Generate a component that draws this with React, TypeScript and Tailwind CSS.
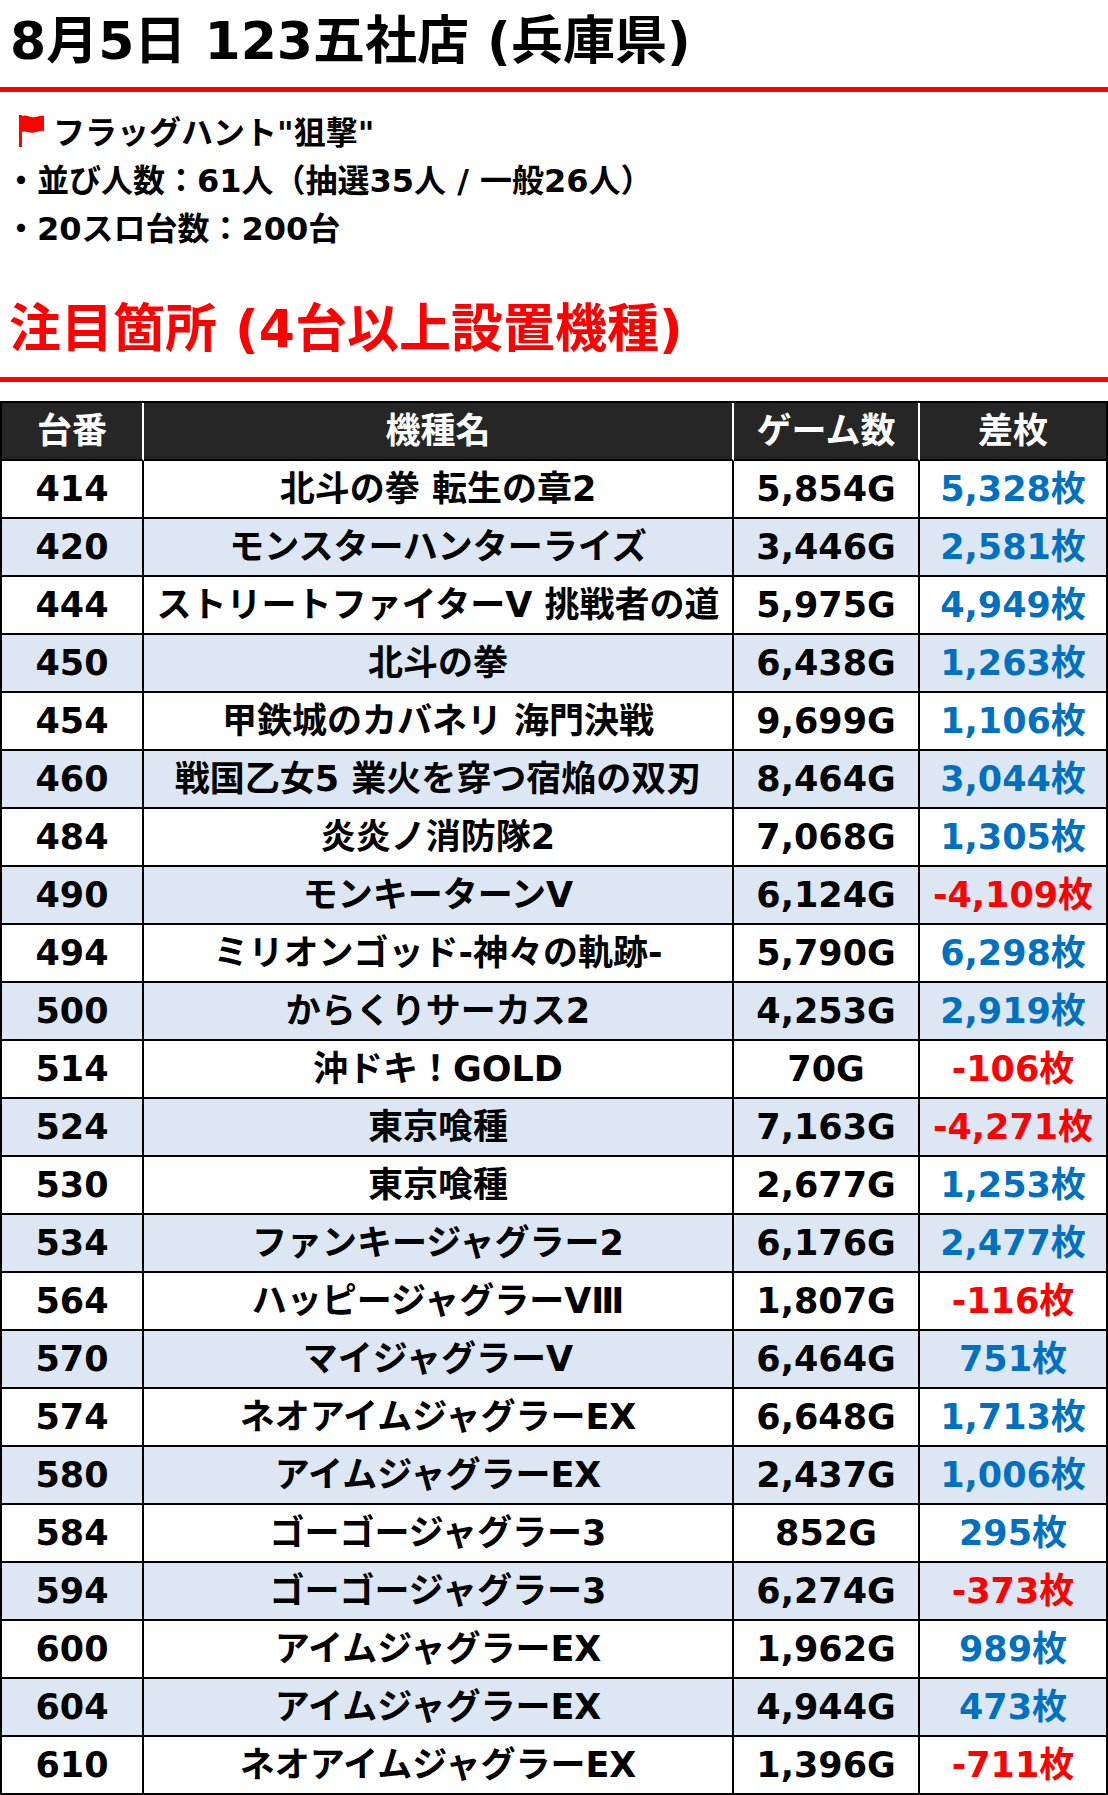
import React from 'react';

type Row = { no: string; name: string; games: string; diff: string };

const rows: Row[] = [
  { no: '414', name: '北斗の拳 転生の章2', games: '5,854G', diff: '5,328枚' },
  { no: '420', name: 'モンスターハンターライズ', games: '3,446G', diff: '2,581枚' },
  { no: '444', name: 'ストリートファイターV 挑戦者の道', games: '5,975G', diff: '4,949枚' },
  { no: '450', name: '北斗の拳', games: '6,438G', diff: '1,263枚' },
  { no: '454', name: '甲鉄城のカバネリ 海門決戦', games: '9,699G', diff: '1,106枚' },
  { no: '460', name: '戦国乙女5 業火を穿つ宿焔の双刃', games: '8,464G', diff: '3,044枚' },
  { no: '484', name: '炎炎ノ消防隊2', games: '7,068G', diff: '1,305枚' },
  { no: '490', name: 'モンキーターンV', games: '6,124G', diff: '-4,109枚' },
  { no: '494', name: 'ミリオンゴッド-神々の軌跡-', games: '5,790G', diff: '6,298枚' },
  { no: '500', name: 'からくりサーカス2', games: '4,253G', diff: '2,919枚' },
  { no: '514', name: '沖ドキ！GOLD', games: '70G', diff: '-106枚' },
  { no: '524', name: '東京喰種', games: '7,163G', diff: '-4,271枚' },
  { no: '530', name: '東京喰種', games: '2,677G', diff: '1,253枚' },
  { no: '534', name: 'ファンキージャグラー2', games: '6,176G', diff: '2,477枚' },
  { no: '564', name: 'ハッピージャグラーVⅢ', games: '1,807G', diff: '-116枚' },
  { no: '570', name: 'マイジャグラーV', games: '6,464G', diff: '751枚' },
  { no: '574', name: 'ネオアイムジャグラーEX', games: '6,648G', diff: '1,713枚' },
  { no: '580', name: 'アイムジャグラーEX', games: '2,437G', diff: '1,006枚' },
  { no: '584', name: 'ゴーゴージャグラー3', games: '852G', diff: '295枚' },
  { no: '594', name: 'ゴーゴージャグラー3', games: '6,274G', diff: '-373枚' },
  { no: '600', name: 'アイムジャグラーEX', games: '1,962G', diff: '989枚' },
  { no: '604', name: 'アイムジャグラーEX', games: '4,944G', diff: '473枚' },
  { no: '610', name: 'ネオアイムジャグラーEX', games: '1,396G', diff: '-711枚' },
];

function Flag() {
  return (
    <svg width="25" height="32" viewBox="0 0 25 32" className="shrink-0 mt-[6px]">
      <rect x="0" y="0" width="3" height="32" fill="#ff0000" />
      <path
        d="M3 1 C 7 -1, 11 3, 16 2 C 19 1.5, 22 0, 25 1 L 25 16 C 22 15, 19 16.5, 15 17.5 C 10 18.5, 7 15.5, 3 17 Z"
        fill="#ff0000"
      />
    </svg>
  );
}

export default function App() {
  return (
    <div className="w-[1108px] bg-white text-black font-bold font-['DejaVu_Sans','Noto_Sans_CJK_JP',sans-serif]">
      {/* Store title */}
      <div className="h-[87px] pt-[15px] pl-[10px]">
        <h1 className="text-[52px] leading-none whitespace-nowrap">8月5日 123五社店 (兵庫県)</h1>
      </div>
      <div className="h-[5px] bg-[#ff0000]" />

      {/* Event info */}
      <div className="pt-[17px] text-[32px] leading-[48px] whitespace-nowrap">
        <div className="flex items-start gap-[9px] pl-[19px]">
          <Flag />
          <span>フラッグハント"狙撃"</span>
        </div>
        <div className="pl-[5px]">・並び人数：61人（抽選35人 / 一般26人）</div>
        <div className="pl-[5px]">・20スロ台数：200台</div>
      </div>

      {/* Section title */}
      <div className="mt-[50px] h-[74px] pl-[9px]">
        <h2 className="text-[52px] leading-none text-[#ff0000] whitespace-nowrap">注目箇所 (4台以上設置機種)</h2>
      </div>
      <div className="h-[5px] bg-[#ff0000]" />

      {/* Table */}
      <div className="pt-[19px]">
        <table className="w-[1108px] table-fixed border-separate border-spacing-0 border-l-2 border-t-2 border-black text-[35px] leading-none">
          <colgroup>
            <col className="w-[142px]" />
            <col className="w-[590px]" />
            <col className="w-[186px]" />
            <col className="w-[188px]" />
          </colgroup>
          <thead>
            <tr>
              <th className="h-[58px] bg-[#262626] text-white border-r-2 border-b-2 border-r-white border-b-black">台番</th>
              <th className="h-[58px] bg-[#262626] text-white border-r-2 border-b-2 border-r-white border-b-black">機種名</th>
              <th className="h-[58px] bg-[#262626] text-white border-r-2 border-b-2 border-r-white border-b-black">ゲーム数</th>
              <th className="h-[58px] bg-[#262626] text-white border-r-2 border-b-2 border-black">差枚</th>
            </tr>
          </thead>
          <tbody>
            {rows.map((r, i) => {
              const bg = i % 2 === 1 ? 'bg-[#dde7f3]' : 'bg-white';
              const neg = r.diff.startsWith('-');
              return (
                <tr key={r.no + i} className={bg}>
                  <td className="h-[58px] text-center border-r-2 border-b-2 border-black">{r.no}</td>
                  <td className="h-[58px] text-center whitespace-nowrap border-r-2 border-b-2 border-black">{r.name}</td>
                  <td className="h-[58px] text-center border-r-2 border-b-2 border-black">{r.games}</td>
                  <td
                    className={`h-[58px] text-center border-r-2 border-b-2 border-black ${
                      neg ? 'text-[#ff0000]' : 'text-[#0070c0]'
                    }`}
                  >
                    {r.diff}
                  </td>
                </tr>
              );
            })}
          </tbody>
        </table>
      </div>
    </div>
  );
}
